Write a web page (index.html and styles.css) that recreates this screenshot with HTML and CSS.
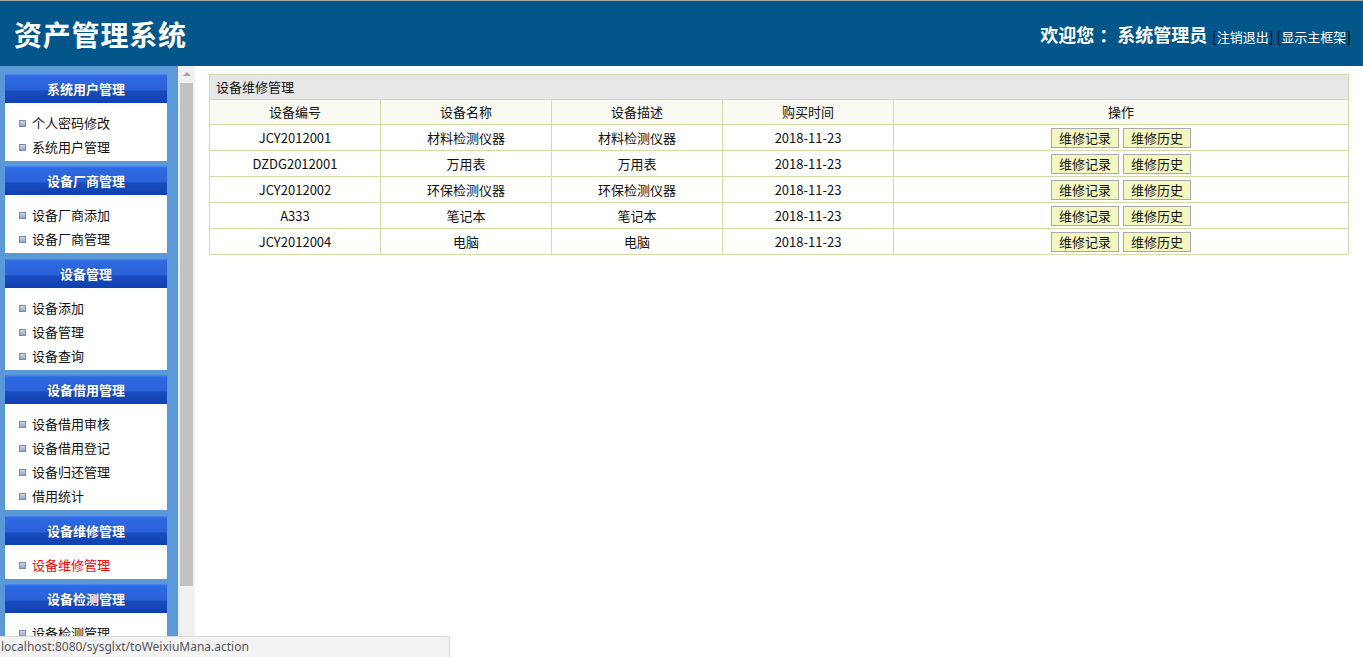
FILE: index.html
```html
<!DOCTYPE html>
<html lang="zh-CN">
<head>
  <meta charset="UTF-8">
  <title>资产管理系统</title>
  <link rel="stylesheet" href="styles.css">
</head>
<body>
  <div class="banner">
      <div class="logo">资产管理系统</div>
      <div class="userbar">
          <span class="welcome">欢迎您<span class="colon">：</span>系统管理员</span>
          <span class="bracket">[</span><a href="#">注销退出</a><span class="bracket">]</span>
          <span class="bracket">[</span><a href="#">显示主框架</a><span class="bracket">]</span>
      </div>
  </div>

  <div class="layout">
      <div class="sidebar">
          <div class="menu">
              <div class="menu-title">系统用户管理</div>
              <ul class="menu-list">
                  <li>个人密码修改</li>
                  <li>系统用户管理</li>
              </ul>
          </div>
          <div class="menu">
              <div class="menu-title">设备厂商管理</div>
              <ul class="menu-list">
                  <li>设备厂商添加</li>
                  <li>设备厂商管理</li>
              </ul>
          </div>
          <div class="menu">
              <div class="menu-title">设备管理</div>
              <ul class="menu-list">
                  <li>设备添加</li>
                  <li>设备管理</li>
                  <li>设备查询</li>
              </ul>
          </div>
          <div class="menu">
              <div class="menu-title">设备借用管理</div>
              <ul class="menu-list">
                  <li>设备借用审核</li>
                  <li>设备借用登记</li>
                  <li>设备归还管理</li>
                  <li>借用统计</li>
              </ul>
          </div>
          <div class="menu">
              <div class="menu-title">设备维修管理</div>
              <ul class="menu-list">
                  <li class="active">设备维修管理</li>
              </ul>
          </div>
          <div class="menu">
              <div class="menu-title">设备检测管理</div>
              <ul class="menu-list">
                  <li>设备检测管理</li>
              </ul>
          </div>
      </div>

      <div class="scrollbar">
          <div class="scroll-arrow"></div>
          <div class="scroll-thumb"></div>
      </div>

      <div class="content">
          <table class="grid">
              <tr>
                  <th class="caption" colspan="5">设备维修管理</th>
              </tr>
              <tr class="head">
                  <td class="col">设备编号</td>
                  <td class="col">设备名称</td>
                  <td class="col">设备描述</td>
                  <td class="col">购买时间</td>
                  <td>操作</td>
              </tr>
              <tr>
                  <td>JCY2012001</td>
                  <td>材料检测仪器</td>
                  <td>材料检测仪器</td>
                  <td>2018-11-23</td>
                  <td><button>维修记录</button><button>维修历史</button></td>
              </tr>
              <tr>
                  <td>DZDG2012001</td>
                  <td>万用表</td>
                  <td>万用表</td>
                  <td>2018-11-23</td>
                  <td><button>维修记录</button><button>维修历史</button></td>
              </tr>
              <tr>
                  <td>JCY2012002</td>
                  <td>环保检测仪器</td>
                  <td>环保检测仪器</td>
                  <td>2018-11-23</td>
                  <td><button>维修记录</button><button>维修历史</button></td>
              </tr>
              <tr>
                  <td>A333</td>
                  <td>笔记本</td>
                  <td>笔记本</td>
                  <td>2018-11-23</td>
                  <td><button>维修记录</button><button>维修历史</button></td>
              </tr>
              <tr>
                  <td>JCY2012004</td>
                  <td>电脑</td>
                  <td>电脑</td>
                  <td>2018-11-23</td>
                  <td><button>维修记录</button><button>维修历史</button></td>
              </tr>
          </table>
      </div>
  </div>

  <div class="statusbar">localhost:8080/sysglxt/toWeixiuMana.action</div>
</body>
</html>
```

FILE: styles.css
```css
html, body {
    height: 100%;
    overflow: hidden;
}

body {
    margin: 0;
    font-family: "Noto Sans CJK SC", "Liberation Sans", sans-serif;
    font-size: 13px;
    color: #111;
    background-color: #fff;
}

.banner {
    height: 65px;
    border-top: 1px solid #a9a9a9;
    background-color: #035689;
    display: flex;
    align-items: center;
    justify-content: space-between;
    padding: 0 12px 0 14px;
}

.logo {
    color: white;
    font-size: 28px;
    font-weight: bold;
    letter-spacing: 0.8px;
}

.userbar {
    color: white;
    font-size: 13px;
}

.welcome {
    font-size: 18px;
    font-weight: bold;
    margin-right: 2px;
}

.colon {
    padding-left: 5px;
}

.userbar a {
    color: white;
    text-decoration: none;
}

.bracket {
    color: #000;
    font-size: 14px;
}

.layout {
    display: flex;
    height: calc(100vh - 66px);
}

.sidebar {
    width: 162px;
    background-color: #5a98d8;
    padding: 8px 11px 0 5px;
    overflow: hidden;
    flex-shrink: 0;
}

.menu {
    margin-bottom: 5.4px;
}

.menu-title {
    height: 29px;
    line-height: 29px;
    text-align: center;
    color: white;
    font-weight: bold;
    text-shadow: 0 0 1px #1a3a8a;
    background: linear-gradient(#4c88ec 0, #2e6ae2 2px, #2a62da 55%, #1a4cbe 58%, #1040b0 100%);
}

.menu-list {
    list-style: none;
    margin: 0;
    padding: 8px 0 2px 0;
    background-color: white;
}

.menu-list li {
    height: 24px;
    line-height: 24px;
    padding-left: 27px;
    position: relative;
    color: #111;
}

.menu-list li::before {
    content: "";
    position: absolute;
    left: 14px;
    top: 9px;
    width: 5px;
    height: 5px;
    border: 1px solid #7d8ca4;
    background: linear-gradient(#c9d8ee, #8fa8cc);
}

.menu-list li.active {
    color: #ff0000;
}

.scrollbar {
    width: 17px;
    background-color: #f0f0f0;
    flex-shrink: 0;
    display: flex;
    flex-direction: column;
    align-items: center;
}

.scroll-arrow {
    width: 0;
    height: 0;
    margin-top: 6px;
    border-left: 4px solid transparent;
    border-right: 4px solid transparent;
    border-bottom: 4px solid #a3a3a3;
}

.scroll-thumb {
    width: 13px;
    height: 503px;
    margin-top: 7px;
    background-color: #c1c1c1;
}

.content {
    flex: 1;
    padding: 8px 14px;
}

.grid {
    width: 100%;
    border-collapse: collapse;
    border: 1px solid #d3dca6;
}

.grid td,
.grid th {
    border: 1px solid #d3dca6;
    height: 25px;
    padding: 0;
    text-align: center;
    font-weight: normal;
    line-height: 18px;
}

.grid .caption {
    height: 24px;
    text-align: left;
    padding-left: 6px;
    background-color: #e7e7e7;
}

.grid .head td {
    height: 24px;
    background-color: #fafaf2;
}

.grid .col {
    width: 170px;
}

.grid button {
    font-family: inherit;
    font-size: 13px;
    line-height: 16px;
    color: #111;
    background-color: #f4f7c0;
    border: 1px solid #aaa;
    height: 20px;
    width: 68px;
    padding: 0;
    margin: 0 2px;
    vertical-align: middle;
}

.statusbar {
    position: fixed;
    left: 0;
    bottom: 0;
    width: 448px;
    height: 20px;
    line-height: 20px;
    padding-left: 1px;
    background-color: #f3f3f3;
    border: 1px solid #d8d8d8;
    border-left: none;
    border-bottom: none;
    border-top-right-radius: 3px;
    color: #555;
    font-family: "Noto Sans", "Liberation Sans", sans-serif;
    font-size: 12px;
}
```
